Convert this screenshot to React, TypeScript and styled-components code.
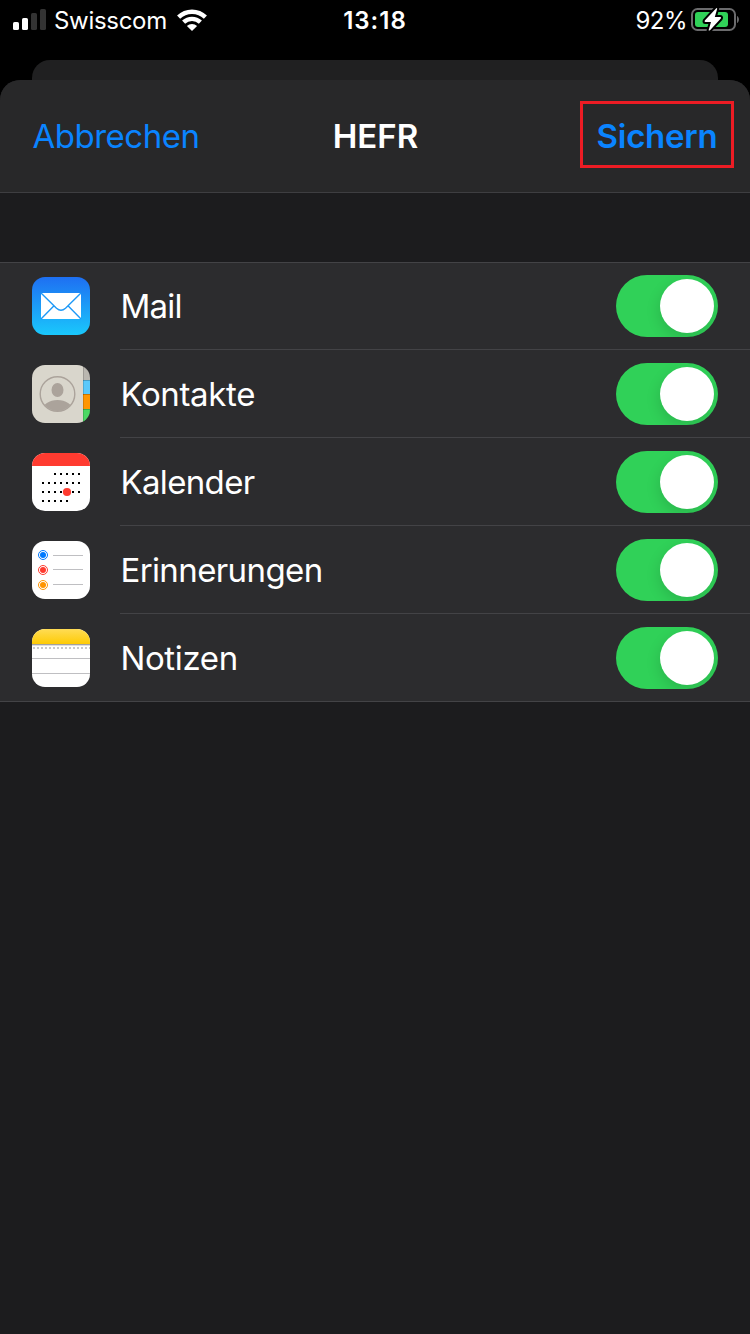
import React from "react";
import styled, { createGlobalStyle } from "styled-components";

const GlobalStyle = createGlobalStyle`
  * { box-sizing: border-box; }
  body {
    margin: 0;
    background: #000;
    font-family: Inter, "Liberation Sans", sans-serif;
    color: #fff;
  }
`;

const Screen = styled.div`
  display: flex;
  flex-direction: column;
  width: 750px;
  height: 1334px;
  overflow: hidden;
  background: #000;
`;

const StatusBar = styled.header`
  display: grid;
  grid-template-columns: 1fr auto 1fr;
  align-items: center;
  height: 40px;
  margin-bottom: 20px;
  padding: 0 10px;
  font-size: 24px;
  line-height: 38px;
`;

const StatusGroup = styled.div<{ $end?: boolean }>`
  display: flex;
  align-items: center;
  justify-content: ${(p) => (p.$end ? "flex-end" : "flex-start")};
  height: 40px;
  padding-left: 3px;
  svg { display: block; flex: none; }
`;

const Carrier = styled.span`
  width: 130px;
  padding: 2px 0 0 7px;
  letter-spacing: -0.3px;
  white-space: nowrap;
`;

const Time = styled.span`
  padding-top: 2px;
  font-weight: 600;
  letter-spacing: 1px;
`;

const Percent = styled.span`
  padding-top: 2px;
  margin-right: 4px;
  letter-spacing: -0.5px;
`;

const BackSheet = styled.div`
  height: 20px;
  margin: 0 32px;
  background: #202021;
  border-radius: 18px 18px 0 0;
`;

const Sheet = styled.main`
  flex: 1;
  background: #1c1c1e;
  border-radius: 20px 20px 0 0;
  overflow: hidden;
`;

const SheetHeader = styled.div`
  display: grid;
  grid-template-columns: 1fr auto 1fr;
  align-items: center;
  height: 113px;
  padding: 0 16px;
  background: #282829;
  border-bottom: 1px solid #3e3e41;
`;

const Title = styled.h1`
  margin: 0;
  padding-left: 1px;
  font-size: 33px;
  font-weight: 600;
  letter-spacing: 0;
`;

const TextButton = styled.button`
  justify-self: start;
  height: 66px;
  margin-left: 16.5px;
  padding: 0;
  border: 0;
  background: none;
  color: #0a84ff;
  font: 400 33px Inter, sans-serif;
  letter-spacing: -0.5px;
  white-space: nowrap;
`;

const SaveButton = styled(TextButton)`
  justify-self: end;
  width: 154px;
  height: 67px;
  margin: -3px 0 0;
  padding: 3px 0 0;
  border: 3px solid #ed1c24;
  font-weight: 600;
  letter-spacing: -0.25px;
`;

const List = styled.ul`
  margin: 69px 0 0;
  padding: 0;
  list-style: none;
  background: #2c2c2e;
  box-shadow: inset 0 1px #434346, inset 0 -1px #434346;
`;

const Row = styled.li`
  display: flex;
  height: 88px;
  padding-left: 32px;
  &:last-child > div { border-bottom-color: transparent; }
`;

const IconSlot = styled.span`
  width: 88px;
  padding-top: 15px;
  svg { display: block; }
`;

const RowBody = styled.div`
  display: flex;
  flex: 1;
  align-items: center;
  justify-content: space-between;
  padding: 1px 32px 0 0;
  border-bottom: 1px solid #434346;
`;

const Label = styled.span<{ $tracking: number }>`
  padding-left: 0.4px;
  font-size: 33px;
  line-height: 40px;
  letter-spacing: ${(p) => p.$tracking}px;
`;

const Toggle = styled.button`
  display: flex;
  justify-content: flex-end;
  width: 102px;
  height: 62px;
  padding: 4px;
  border: 0;
  border-radius: 31px;
  background: #30d158;
  overflow: hidden;
`;

const Knob = styled.span`
  width: 54px;
  height: 54px;
  border-radius: 50%;
  background: #fff;
  box-shadow: -1px 5px 14px rgba(0, 0, 0, 0.13);
`;

const Signal = () => (
  <svg width="34" height="40" viewBox="0 0 34 40">
    <rect x="0" y="22" width="6" height="8" rx="1.6" fill="#fff" />
    <rect x="9" y="18" width="6" height="12" rx="1.6" fill="#fff" />
    <rect x="18" y="13" width="6" height="17" rx="1.6" fill="#333" />
    <rect x="27" y="9" width="6" height="21" rx="1.6" fill="#333" />
  </svg>
);

const Wifi = () => (
  <svg width="30" height="40" viewBox="0 0 30 40">
    <g fill="none" stroke="#fff" strokeWidth="4.4">
      <path d="M1.6 17.2A19.2 19.2 0 0 1 28.4 17.2" />
      <path d="M6.6 22.2A12.2 12.2 0 0 1 23.4 22.2" />
    </g>
    <path d="M15 31L9.9 26A7.6 7.6 0 0 1 20.1 26Z" fill="#fff" />
  </svg>
);

const Battery = () => (
  <svg width="49" height="40" viewBox="0 0 49 40">
    <rect x="1" y="9" width="43" height="21" rx="5.5" fill="none" stroke="#6b6b6d" strokeWidth="2" />
    <rect x="4" y="12" width="33" height="15" rx="3" fill="#30d158" />
    <path d="M46 16C48.6 17.2 48.6 21.8 46 23Z" fill="#6b6b6d" />
    <path
      d="M25 8.4L13.8 20.6Q13 22 14.4 22H20L17.6 30.2Q18 31 19 30.2L29.8 18.6Q30.6 17.2 29.2 17H23.8L26.2 8.8Q26 7.6 25 8.4Z"
      fill="#fff" stroke="#000" strokeWidth="4" strokeLinejoin="round" paintOrder="stroke"
    />
  </svg>
);

const MailIcon = () => (
  <svg width="58" height="58" viewBox="0 0 58 58">
    <defs>
      <linearGradient id="mail" x2="0" y2="1">
        <stop stopColor="#1e6ff2" />
        <stop offset="1" stopColor="#1ac8fc" />
      </linearGradient>
    </defs>
    <rect width="58" height="58" rx="13" fill="url(#mail)" />
    <rect x="9" y="16" width="40" height="26" rx="1" fill="#fff" />
    <path
      d="M9 16L24.5 31.3Q29 35.3 33.5 31.3L49 16M9 42L21.5 29.3M49 42L36.5 29.3"
      fill="none" stroke="#1e99f7" strokeWidth="1.4"
    />
  </svg>
);

const ContactsIcon = () => (
  <svg width="58" height="58" viewBox="0 0 58 58">
    <defs>
      <clipPath id="contacts"><rect width="58" height="58" rx="13" /></clipPath>
      <clipPath id="portrait"><circle cx="25.5" cy="29" r="17" /></clipPath>
    </defs>
    <g clipPath="url(#contacts)">
      <path d="M0 0H51V58H0Z" fill="#d9d6cc" />
      <path d="M51 0H58V15H51Z" fill="#bab7b0" />
      <path d="M51 15H58V29H51Z" fill="#5ac8fa" />
      <path d="M51 29H58V44H51Z" fill="#ff9500" />
      <path d="M51 44H58V58H51Z" fill="#4cd964" />
      <path d="M51 15.5H58M51 29.5H58M51 44.5H58" stroke="#000" strokeOpacity=".22" />
      <path d="M51.5 0V58" stroke="#000" strokeOpacity=".15" />
    </g>
    <circle cx="25.5" cy="29" r="17.3" fill="none" stroke="#aba39b" strokeWidth="1.4" />
    <ellipse cx="25.5" cy="25" rx="6" ry="7" fill="#aba39b" />
    <ellipse cx="25.5" cy="45" rx="15" ry="10" fill="#aba39b" clipPath="url(#portrait)" />
  </svg>
);

const calendarDots = [
  { y: 20, xs: [22, 28, 34, 40, 46] },
  { y: 29, xs: [10, 16, 22, 28, 34, 40, 46] },
  { y: 38, xs: [10, 16, 22, 28, 40, 46] },
  { y: 47, xs: [10, 16, 22, 28, 34] },
];

const CalendarIcon = () => (
  <svg width="58" height="58" viewBox="0 0 58 58">
    <defs><clipPath id="calendar"><rect width="58" height="58" rx="13" /></clipPath></defs>
    <g clipPath="url(#calendar)">
      <path d="M0 0H58V58H0Z" fill="#fff" />
      <path d="M0 0H58V13H0Z" fill="#ff3b30" />
    </g>
    {calendarDots.map(({ y, xs }) =>
      xs.map((x) => <rect key={`${x}-${y}`} x={x} y={y} width="2" height="2" fill="#000" />)
    )}
    <circle cx="35" cy="39" r="4.1" fill="#ff3b30" />
  </svg>
);

const reminders = [
  { y: 14, line: 14.5, color: "#007aff" },
  { y: 29, line: 28.5, color: "#ff3b30" },
  { y: 44, line: 43.5, color: "#ff9500" },
];

const RemindersIcon = () => (
  <svg width="58" height="58" viewBox="0 0 58 58">
    <rect width="58" height="58" rx="13" fill="#fff" />
    {reminders.map(({ y, line, color }) => (
      <g key={color}>
        <circle cx="11" cy={y} r="4.5" fill="none" stroke={color} />
        <circle cx="11" cy={y} r="3" fill={color} />
        <path d={`M21 ${line}H51`} stroke="#bfbfc2" />
      </g>
    ))}
  </svg>
);

const NotesIcon = () => (
  <svg width="58" height="58" viewBox="0 0 58 58">
    <defs>
      <clipPath id="notes"><rect width="58" height="58" rx="13" /></clipPath>
      <linearGradient id="pad" x2="0" y2="1">
        <stop stopColor="#ffdc55" />
        <stop offset="1" stopColor="#fecb05" />
      </linearGradient>
    </defs>
    <g clipPath="url(#notes)">
      <path d="M0 0H58V58H0Z" fill="#fff" />
      <path d="M0 0H58V15H0Z" fill="url(#pad)" />
      <path d="M0 15.5H58" stroke="#a3a2a0" />
      <path d="M0 16.5H58" stroke="#dedede" />
      <path d="M1 19H58" stroke="#c9c9cb" strokeWidth="2" strokeDasharray="2 2" />
      <path d="M0 29.5H58M0 44.5H58" stroke="#bfbfc2" />
    </g>
  </svg>
);

const services = [
  { name: "Mail", Icon: MailIcon, tracking: -0.7 },
  { name: "Kontakte", Icon: ContactsIcon, tracking: -0.35 },
  { name: "Kalender", Icon: CalendarIcon, tracking: -0.65 },
  { name: "Erinnerungen", Icon: RemindersIcon, tracking: -0.6 },
  { name: "Notizen", Icon: NotesIcon, tracking: -0.35 },
];

export default function App() {
  return (
    <Screen>
      <GlobalStyle />
      <StatusBar>
        <StatusGroup>
          <Signal />
          <Carrier>Swisscom</Carrier>
          <Wifi />
        </StatusGroup>
        <Time>13:18</Time>
        <StatusGroup $end>
          <Percent>92%</Percent>
          <Battery />
        </StatusGroup>
      </StatusBar>
      <BackSheet />
      <Sheet>
        <SheetHeader>
          <TextButton>Abbrechen</TextButton>
          <Title>HEFR</Title>
          <SaveButton>Sichern</SaveButton>
        </SheetHeader>
        <List>
          {services.map(({ name, Icon, tracking }) => (
            <Row key={name}>
              <IconSlot><Icon /></IconSlot>
              <RowBody>
                <Label $tracking={tracking}>{name}</Label>
                <Toggle role="switch" aria-checked="true" aria-label={name}><Knob /></Toggle>
              </RowBody>
            </Row>
          ))}
        </List>
      </Sheet>
    </Screen>
  );
}
